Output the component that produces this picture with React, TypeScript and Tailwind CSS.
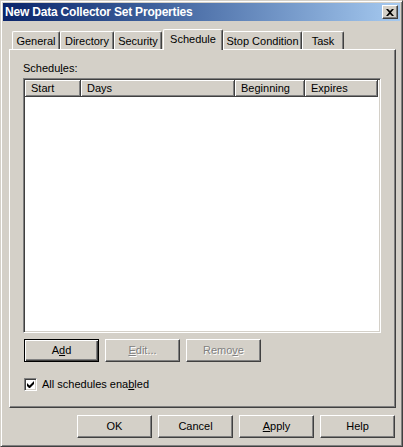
import type { ReactNode } from "react";

const raised = "border border-t-white border-l-white border-r-[#404040] border-b-[#404040] shadow-[inset_-1px_-1px_#808080]";

function Btn({ children, def, disabled, className = "" }: { children: ReactNode; def?: boolean; disabled?: boolean; className?: string }) {
  const frame = def
    ? "border border-black shadow-[inset_1px_1px_#fff,inset_-1px_-1px_#404040,inset_-2px_-2px_#808080]"
    : raised;
  return (
    <div
      className={`flex h-[23px] w-[75px] items-center justify-center bg-[#D4D0C8] ${frame} ${
        disabled ? "text-[#808080] [text-shadow:1px_1px_#fff]" : "text-black"
      } ${className}`}
    >
      {children}
    </div>
  );
}

const tabs = [
  { label: "General", w: 48 },
  { label: "Directory", w: 54 },
  { label: "Security", w: 48 },
  { label: "Schedule", w: 60, active: true },
  { label: "Stop Condition", w: 79 },
  { label: "Task", w: 42 },
];

const cols = [
  { label: "Start", w: 56 },
  { label: "Days", w: 154 },
  { label: "Beginning", w: 70 },
  { label: "Expires", w: 73 },
];

export default function App() {
  return (
    <div className="flex h-[447px] w-[403px] flex-col border border-t-[#D4D0C8] border-l-[#D4D0C8] border-r-[#404040] border-b-[#404040] bg-[#D4D0C8] p-[2px] font-['Liberation_Sans',Arial,sans-serif] text-[11px] leading-[13px] text-black shadow-[inset_1px_1px_#fff,inset_-1px_-1px_#808080]">
      {/* title bar */}
      <div className="flex h-[18px] items-center bg-gradient-to-r from-[#0A246A] to-[#A6CAF0] pl-[2px] pr-[2px]">
        <span className="flex-1 text-[12px] font-bold tracking-[-0.2px] text-white">New Data Collector Set Properties</span>
        <div className={`flex h-[14px] w-[16px] items-center justify-center bg-[#D4D0C8] ${raised}`}>
          <svg width="8" height="7" viewBox="0 0 8 7">
            <path d="M0 0h2l2 2 2-2h2L5 3.5 8 7H6L4 5 2 7H0l3-3.5z" fill="#000" />
          </svg>
        </div>
      </div>

      {/* tabs */}
      <div className="mt-[8px] flex h-[20px] items-end pl-[9px]">
        {tabs.map((t) =>
          t.active ? (
            <div
              key={t.label}
              style={{ width: t.w }}
              className="relative z-10 -mb-px ml-px flex h-[21px] items-start justify-center rounded-t-[2px] border border-b-0 border-t-white border-l-white border-r-[#404040] bg-[#D4D0C8] pt-[3px] shadow-[inset_-1px_0_#808080]"
            >
              {t.label}
            </div>
          ) : (
            <div
              key={t.label}
              style={{ width: t.w }}
              className="flex h-[18px] items-center justify-center rounded-t-[2px] border border-b-0 border-t-white border-l-white border-r-[#404040] pt-px shadow-[inset_-1px_0_#808080]"
            >
              {t.label}
            </div>
          )
        )}
      </div>

      {/* tab panel */}
      <div className={`ml-[6px] flex h-[359px] w-[387px] flex-col pl-[13px] pt-[12px] ${raised}`}>
        <div>
          Schedu<u className="underline-offset-1">l</u>es:
        </div>
        <div className="mt-[3px] flex h-[255px] w-[358px] flex-col border border-t-[#808080] border-l-[#808080] border-r-white border-b-white bg-white shadow-[inset_1px_1px_#404040,inset_-1px_-1px_#D4D0C8] p-px">
          <div className="flex h-[17px]">
            {cols.map((c) => (
              <div
                key={c.label}
                style={{ width: c.w }}
                className="flex items-center border-r border-b border-r-[#404040] border-b-[#404040] bg-[#D4D0C8] pl-[6px] shadow-[inset_1px_1px_#fff,inset_-1px_-1px_#808080]"
              >
                {c.label}
              </div>
            ))}
          </div>
        </div>

        <div className="mt-[6px] flex gap-[6px] pl-px">
          <Btn def>
            A<u>d</u>d
          </Btn>
          <Btn disabled>
            <u>E</u>dit...
          </Btn>
          <Btn disabled>
            Remo<u>v</u>e
          </Btn>
        </div>

        <div className="mt-[16px] flex items-center gap-[5px] pl-px">
          <div className="flex h-[13px] w-[13px] items-center justify-center border border-t-[#808080] border-l-[#808080] border-r-white border-b-white bg-white shadow-[inset_1px_1px_#404040,inset_-1px_-1px_#D4D0C8]">
            <svg width="7" height="7" viewBox="0 0 7 7">
              <path d="M0 2v3l2 2h1l4-4V0L2.5 4.5z" fill="#000" />
            </svg>
          </div>
          <span>
            All schedules ena<u>b</u>led
          </span>
        </div>
      </div>

      {/* dialog buttons */}
      <div className="mt-[7px] flex justify-end gap-[6px] pr-[5px]">
        <Btn>OK</Btn>
        <Btn>Cancel</Btn>
        <Btn>
          <u>A</u>pply
        </Btn>
        <Btn>Help</Btn>
      </div>
    </div>
  );
}
